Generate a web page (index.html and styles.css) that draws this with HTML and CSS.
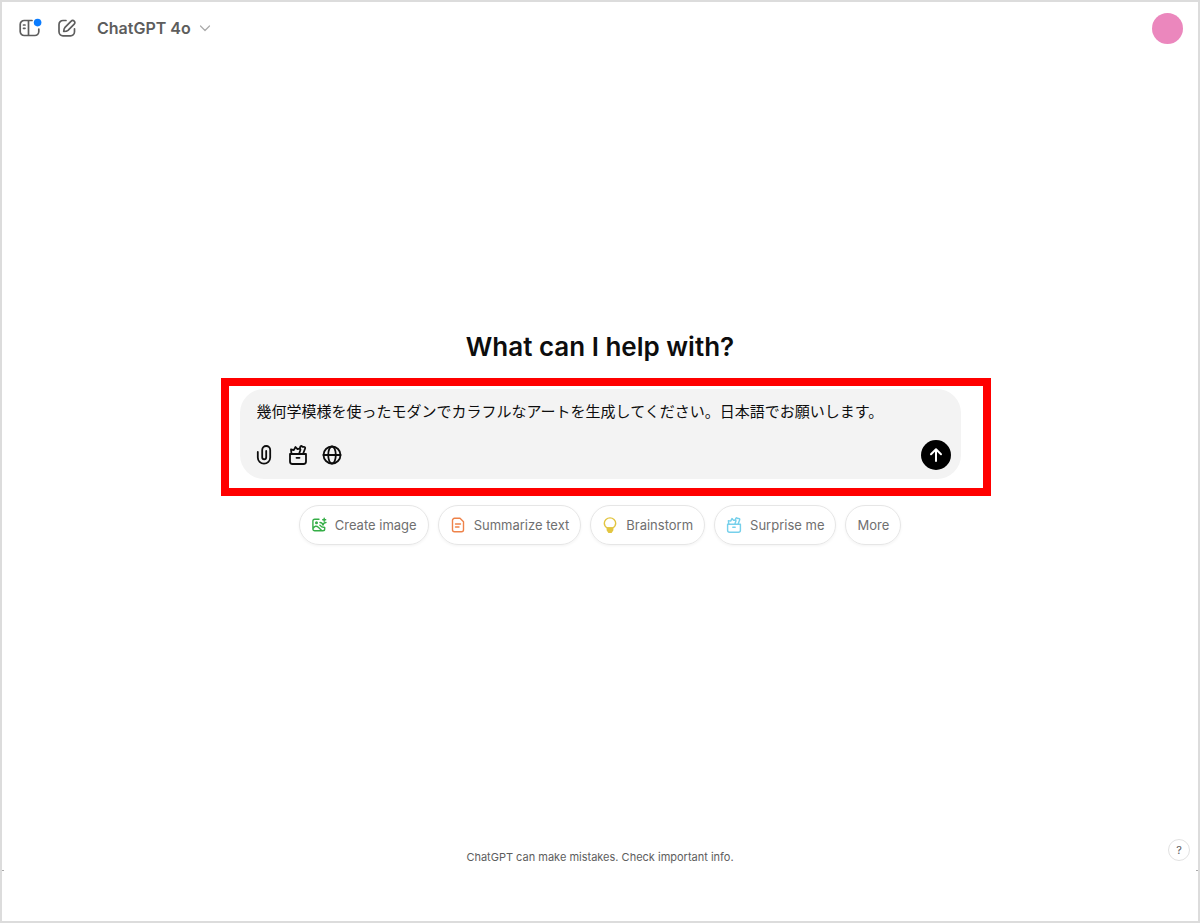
FILE: index.html
```html
<!DOCTYPE html>
<html lang="ja">
<head>
<meta charset="utf-8">
<meta name="viewport" content="width=device-width, initial-scale=1">
<title>ChatGPT</title>
<link rel="stylesheet" href="styles.css">
</head>
<body>
<svg class="sprite" aria-hidden="true">
  <symbol id="basket" viewBox="0 0 20 20">
    <path d="M2 9h16v7.500a2.500 2.500 0 0 1-2.500 2.500h-11A2.500 2.500 0 0 1 2 16.500zM8.500 12.800h3M3.500 9L3 4.500l2.800.6L7.500 2l2 2.200 1.800-.5M11 9l1.500-4.200C11.500 3 12 1 13.500 1l1 .8h1.300c1.200 0 1.700 1 1.200 2L15 9"/>
  </symbol>
</svg>
<header class="topbar">
  <button class="icon-button" type="button" aria-label="Open sidebar">
    <svg class="icon-top" viewBox="0 0 24 20">
      <path d="M14 2.500H6.200A4 4 0 0 0 2.200 6.500v7A4 4 0 0 0 6.200 17.500h10.600a4 4 0 0 0 4-4V11M10.500 2.500v15M5.500 7h1.500M5.500 10.300h1.500"/>
      <circle class="dot" cx="19.600" cy="4.600" r="3.800"/>
    </svg>
  </button>
  <button class="icon-button" type="button" aria-label="New chat">
    <svg class="icon-top" viewBox="0 0 24 20">
      <path d="M11 2.500H8A4 4 0 0 0 4 6.500V13.800a4 4 0 0 0 4 4h7.500a4 4 0 0 0 4-4v-3M10 9.300l6.200-6.200a2 2 0 0 1 3 0 2 2 0 0 1 0 3L13 12.300c-1 .9-2.300 1.100-4.300 1.200.1-2 .4-3.300 1.300-4.200z"/>
    </svg>
  </button>
  <button class="model" type="button">ChatGPT 4o
    <svg class="chevron" viewBox="0 0 12 12"><path d="M1.500 4L6 8.500 10.500 4"/></svg>
  </button>
  <button class="avatar" type="button" aria-label="Account"></button>
</header>
<main class="main">
  <h1 class="title">What can I help with?</h1>
  <form class="composer">
    <textarea class="prompt" rows="1" aria-label="Message">幾何学模様を使ったモダンでカラフルなアートを生成してください。日本語でお願いします。</textarea>
    <div class="tools">
      <button class="tool" type="button" aria-label="Attach file">
        <svg class="icon-tool" viewBox="0 0 20 20"><path d="M3.800 7v5.500a6.200 6.200 0 0 0 12.400 0V5a4 4 0 0 0-8 0v7.300a2 2 0 0 0 4 0V6"/></svg>
      </button>
      <button class="tool" type="button" aria-label="Tools">
        <svg class="icon-tool"><use href="#basket"/></svg>
      </button>
      <button class="tool" type="button" aria-label="Search the web">
        <svg class="icon-tool" viewBox="0 0 20 20"><circle cx="10" cy="10" r="8.500"/><path d="M1.500 10h17"/><ellipse cx="10" cy="10" rx="3.800" ry="8.500"/></svg>
      </button>
      <button class="send" type="button" aria-label="Send">
        <svg class="icon-send" viewBox="0 0 16 16"><path d="M8 14V2.500M3 7.300l5-5 5 5"/></svg>
      </button>
    </div>
  </form>
  <div class="chips">
    <button class="chip" type="button">
      <svg class="icon-chip green" viewBox="0 0 16 16"><path d="M8 2.300H3.700A1.800 1.800 0 0 0 1.900 4.100V12a1.800 1.800 0 0 0 1.800 1.800h8.200a1.800 1.800 0 0 0 1.800-1.800v-1.500M2 11.500c1.800-2.500 3.500-3 5.300-1.300L11 13.800M8.800 8.200c1.500 2 2.700 2.300 4.700 2.300M9 5.500c2 0 2.500.8 3 2.500.4-1.700 1-2.500 3-2.500M13.200 1.200v3M11.700 2.700h3"/><circle cx="5.500" cy="5.800" r=".8"/></svg>
      Create image
    </button>
    <button class="chip" type="button">
      <svg class="icon-chip orange" viewBox="0 0 16 16"><path d="M10 1.300H4.500a2 2 0 0 0-2 2v9.400a2 2 0 0 0 2 2h7a2 2 0 0 0 2-2V4.800zM5.500 7h5M5.500 10h3.500"/></svg>
      Summarize text
    </button>
    <button class="chip" type="button">
      <svg class="icon-chip yellow" viewBox="0 0 16 16"><path d="M5.300 11C3.300 9.800 2.300 8.300 2.300 6.200a5.700 5.300 0 0 1 11.400 0c0 2.100-1 3.600-3 4.800z"/><path class="solid" d="M5.300 11h5.400v2l-1.500 2.300H6.800L5.300 13z"/></svg>
      Brainstorm
    </button>
    <button class="chip" type="button">
      <svg class="icon-chip sky"><use href="#basket"/></svg>
      Surprise me
    </button>
    <button class="chip" type="button">More</button>
  </div>
</main>
<footer class="footer">
  <p class="notice">ChatGPT can make mistakes. Check important info.</p>
  <button class="help" type="button" aria-label="Help">?</button>
</footer>
</body>
</html>
```
FILE: styles.css
```css
* { box-sizing: border-box; }

body {
  margin: 0;
  min-height: 100vh;
  display: flex;
  flex-direction: column;
  border: 2px solid #dcdcdc;
  background: #fff;
  color: #0d0d0d;
  font-family: Inter, "Noto Sans CJK JP", sans-serif;
}

button {
  margin: 0;
  padding: 0;
  border: 0;
  background: none;
  color: inherit;
  font: inherit;
}

svg {
  fill: none;
  stroke: currentColor;
  stroke-linecap: round;
  stroke-linejoin: round;
}

.sprite { position: absolute; width: 0; height: 0; }

.topbar {
  display: flex;
  align-items: center;
  height: 52px;
  padding: 0 15px 0 16px;
  color: #5d5d5d;
}

.icon-button { display: flex; width: 37px; }
.icon-top { width: 24px; height: 20px; stroke-width: 1.7; }
.dot { fill: #0a7cff; stroke: none; }

.model {
  display: flex;
  align-items: center;
  gap: 8px;
  margin-left: 5px;
  font-size: 16px;
  line-height: 20px;
  font-weight: 600;
}

.chevron { width: 12px; height: 12px; stroke: #aaa; stroke-width: 1.2; }

.avatar {
  width: 31px;
  height: 31px;
  margin-left: auto;
  border-radius: 50%;
  background: #eb87bd;
}

.main {
  flex: 1;
  display: flex;
  flex-direction: column;
  align-items: center;
  justify-content: center;
  padding: 0 30px 30px;
}

.title {
  margin: 0 0 24px;
  font-size: 26px;
  line-height: 36px;
  font-weight: 600;
}

.composer {
  position: relative;
  width: 100%;
  max-width: 721px;
  padding: 10px 10px 9px 17px;
  border-radius: 24px;
  background: #f3f3f3;
}

.composer::after {
  content: "";
  position: absolute;
  inset: -11px -30px -17px -19px;
  border: 8px solid #f00;
  pointer-events: none;
}

.prompt {
  display: block;
  width: 100%;
  height: 24px;
  margin: 0 0 17px;
  padding: 0;
  border: 0;
  outline: 0;
  resize: none;
  overflow: hidden;
  background: none;
  color: #0d0d0d;
  font-family: "Noto Sans CJK JP", sans-serif;
  font-size: 15px;
  line-height: 24px;
}

.tools { display: flex; align-items: center; }
.tool { display: flex; width: 34px; margin-left: -3px; margin-right: 3px; }
.icon-tool { width: 20px; height: 20px; stroke-width: 1.8; }

.send {
  display: flex;
  align-items: center;
  justify-content: center;
  width: 30px;
  height: 30px;
  margin-left: auto;
  border-radius: 50%;
  background: #000;
  color: #fff;
}

.icon-send { width: 16px; height: 16px; stroke-width: 2; }

.chips {
  display: flex;
  flex-wrap: wrap;
  justify-content: center;
  gap: 9px;
  margin-top: 26px;
}

.chip {
  display: flex;
  align-items: center;
  gap: 8px;
  height: 40px;
  padding: 0 11px;
  border: 1px solid #e6e6e6;
  border-radius: 20px;
  box-shadow: 0 1px 3px #0000000d;
  color: #6f6f6f;
  font-size: 13px;
}

.icon-chip { width: 16px; height: 16px; stroke-width: 1.4; }
.green { color: #35ae47; }
.orange { color: #ee8249; }
.yellow { color: #e2c541; }
.sky { color: #76d0eb; stroke-width: 1.8; }
.solid { fill: currentColor; }

.footer {
  position: relative;
  padding: 0 30px 56px;
}

.footer::before,
.footer::after {
  content: "";
  position: absolute;
  bottom: 50px;
  left: 0;
  width: 2px;
  height: 1px;
  background: #aaa;
}

.footer::after { left: auto; right: 0; }

.notice {
  margin: 0;
  text-align: center;
  color: #5d5d5d;
  font-size: 11px;
  line-height: 16px;
}

.help {
  position: absolute;
  right: 8px;
  bottom: 60px;
  width: 22px;
  height: 22px;
  border: 1px solid #e2e2e2;
  border-radius: 50%;
  color: #5d5d5d;
  font-size: 11px;
}
```
